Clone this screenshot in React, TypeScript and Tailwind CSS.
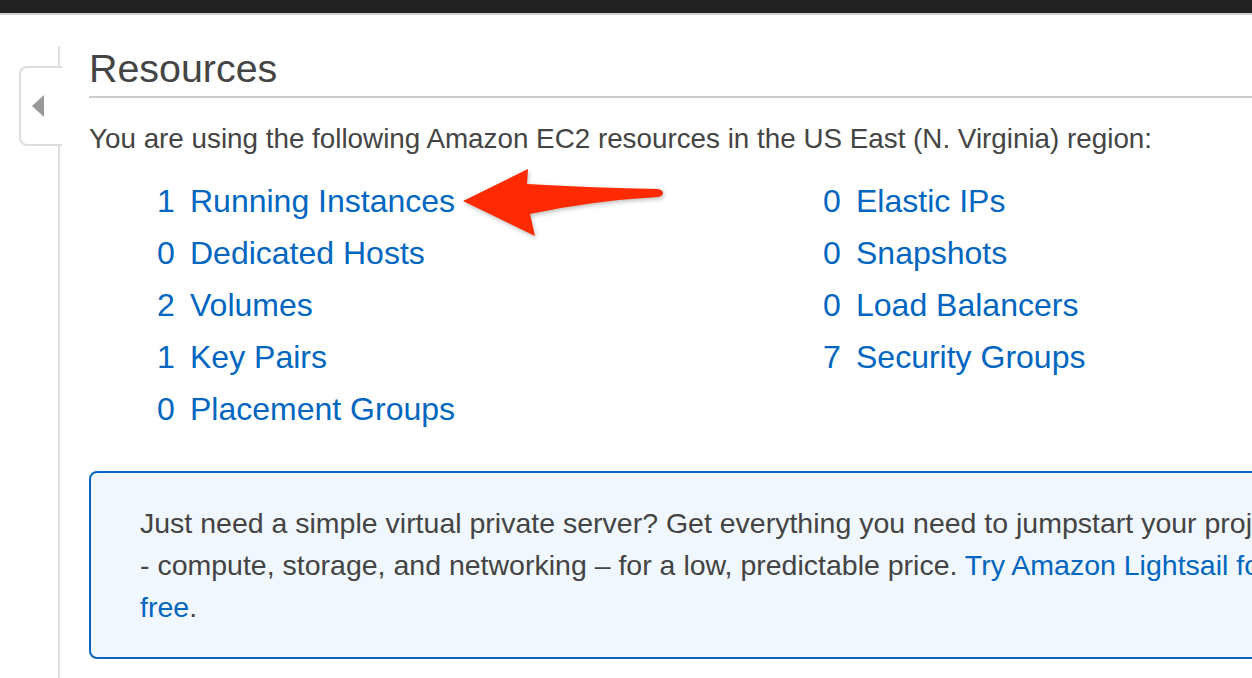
import React from "react";

const left = [
  ["1", "Running Instances"],
  ["0", "Dedicated Hosts"],
  ["2", "Volumes"],
  ["1", "Key Pairs"],
  ["0", "Placement Groups"],
];
const right = [
  ["0", "Elastic IPs"],
  ["0", "Snapshots"],
  ["0", "Load Balancers"],
  ["7", "Security Groups"],
];

function Col({ items }: { items: string[][] }) {
  return (
    <div className="flex flex-col w-[666px]">
      {items.map(([n, t]) => (
        <div key={t} className="flex text-[32px] leading-[52px] text-[#0066c0] whitespace-nowrap">
          <span className="w-[33px]">{n}</span>
          <span>{t}</span>
        </div>
      ))}
    </div>
  );
}

export default function App() {
  return (
    <div
      className="relative w-[1252px] h-[678px] overflow-hidden bg-white text-[#444]"
      style={{ fontFamily: '"Liberation Sans", Arial, Helvetica, sans-serif' }}
    >
      <div className="h-[15px] bg-[#222] border-b-2 border-[#cfcfcf]" />
      <div className="flex mt-[31px] h-[700px]">
        <div className="relative w-[60px] shrink-0 border-r-2 border-[#dddddd]">
          <div className="absolute left-[19px] top-[20px] w-[43px] h-[80px] bg-white border-2 border-r-0 border-[#dddddd] rounded-l-[8px] flex items-center justify-center pr-[8px]">
            <svg width="14" height="24" viewBox="0 0 14 24">
              <polygon points="13,1 13,23 1,12" fill="#999" />
            </svg>
          </div>
        </div>
        <div className="flex-1 pl-[29px]">
          <h1 className="mt-[3px] text-[39.4px] leading-[38px] pb-[9px] border-b-2 border-[#cccccc] font-normal whitespace-nowrap">
            Resources
          </h1>
          <p className="mt-[25px] text-[27.8px] leading-[32px] whitespace-nowrap">
            You are using the following Amazon EC2 resources in the US East (N. Virginia) region:
          </p>
          <div className="flex mt-[20px] pl-[68px]">
            <Col items={left} />
            <Col items={right} />
          </div>
          <div className="mt-[36px] w-[1300px] border-2 border-[#0a66c2] rounded-[8px] bg-[#f0f7fe] pl-[49px] pt-[29px] pb-[29px] text-[28.5px] leading-[42px] whitespace-nowrap">
            Just need a simple virtual private server? Get everything you need to jumpstart your project
            <br />- compute, storage, and networking – for a low, predictable price.{" "}
            <span className="text-[#0066c0]">Try Amazon Lightsail for</span>
            <br />
            <span className="text-[#0066c0]">free</span>.
          </div>
        </div>
      </div>
      <svg
        className="absolute left-0 top-0 pointer-events-none"
        width="1252"
        height="678"
        viewBox="0 0 1252 678"
        style={{ filter: "drop-shadow(1px 2px 2px rgba(0,0,0,0.25))" }}
      >
        <path
          d="M463,201 L528,169 L527,184 Q595,188 658,189 Q663,190 663,193 Q663,196 658,197 Q590,201 530,214 L535,236 Z"
          fill="#ff2a00"
        />
      </svg>
    </div>
  );
}
